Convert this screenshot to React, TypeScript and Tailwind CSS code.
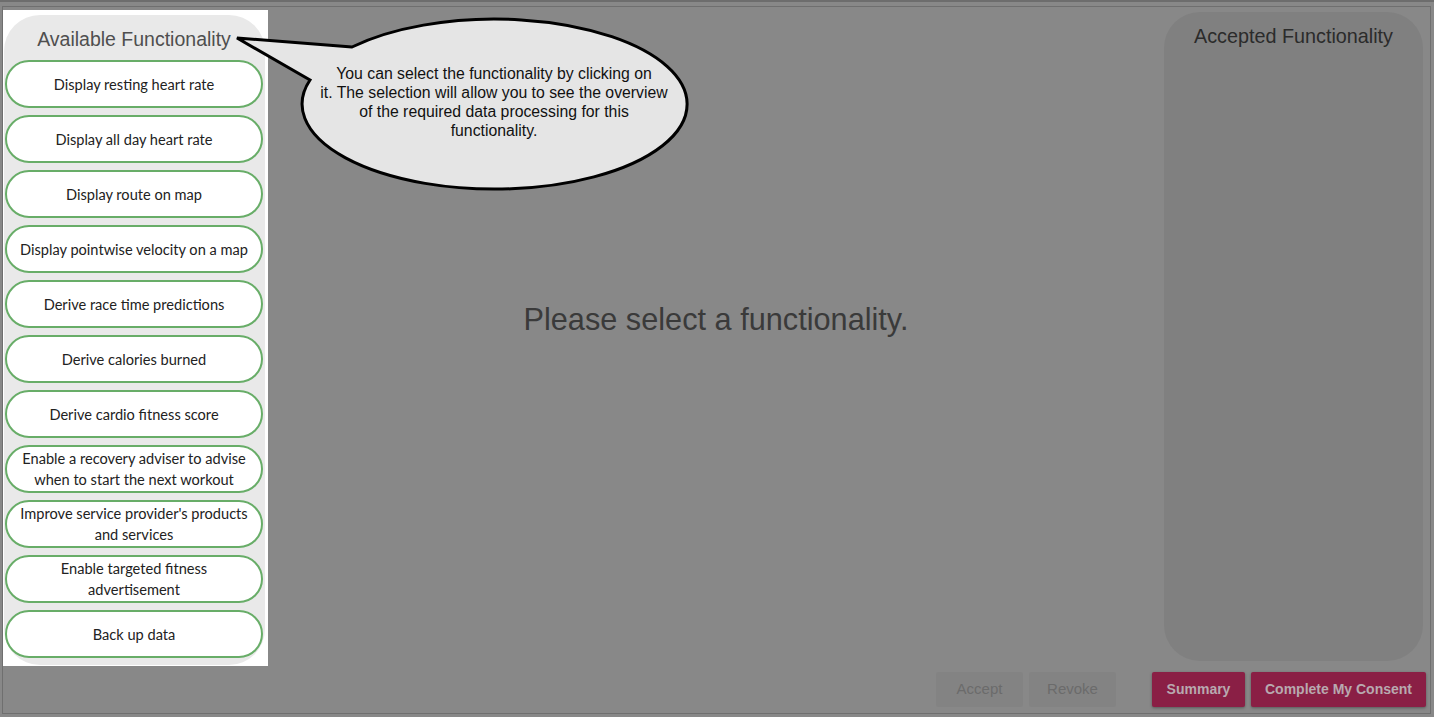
import React from "react"

const functionality = [
  ["Display resting heart rate"],
  ["Display all day heart rate"],
  ["Display route on map"],
  ["Display pointwise velocity on a map"],
  ["Derive race time predictions"],
  ["Derive calories burned"],
  ["Derive cardio fitness score"],
  ["Enable a recovery adviser to advise", "when to start the next workout"],
  ["Improve service provider's products", "and services"],
  ["Enable targeted fitness", "advertisement"],
  ["Back up data"],
]

function FunctionalityButton({ lines }: { lines: string[] }) {
  return (
    <button className="h-[48px] w-[258px] shrink-0 rounded-full border-2 border-[#68ad68] bg-white text-center font-['Lato',sans-serif] text-[14.6px] leading-[21px] text-[#222]">
      {lines.map((line) => (
        <div key={line}>{line}</div>
      ))}
    </button>
  )
}

function Callout() {
  return (
    <div className="absolute left-[230px] top-[10px] h-[185px] w-[470px]">
      <svg width="470" height="185" viewBox="230 10 470 185" className="absolute left-0 top-0">
        <path
          d="M352 45 L237 36 L310 78 A192.5 85 0 1 0 352 45 Z"
          fill="#e5e5e5"
          stroke="#000"
          strokeWidth="3"
          strokeLinejoin="miter"
        />
      </svg>
      <div className="absolute left-[58px] top-[52px] w-[412px] text-center font-['Liberation_Sans',Arial,sans-serif] text-[15.8px] leading-[19px] text-[#111]">
        You can select the functionality by clicking on
        <br />
        it. The selection will allow you to see the overview
        <br />
        of the required data processing for this
        <br />
        functionality.
      </div>
    </div>
  )
}

export default function App() {
  return (
    <div className="relative h-[717px] w-[1434px] overflow-hidden border-t-2 border-[#6d6d6d] bg-[#888888] font-['Liberation_Sans',Arial,sans-serif]">
      <div className="ml-[2px] mt-[4px] flex h-[708px] w-[1429px] border border-[#6f6f6f]">
        {/* highlighted list of functionality */}
        <div className="mt-[3px] h-[656px] w-[265px] shrink-0 bg-white pl-[1px] pt-[5px]">
          <div className="flex h-[650px] w-[261px] flex-col items-start rounded-[36px] bg-[#e9e9e9] pl-[1px]">
            <div className="w-[258px] pt-[13px] text-center text-[19.5px] leading-[22px] text-[#4f4f4f]">
              Available Functionality
            </div>
            <div className="mt-[10px] flex flex-col gap-[7px]">
              {functionality.map((lines) => (
                <FunctionalityButton key={lines[0]} lines={lines} />
              ))}
            </div>
          </div>
        </div>

        <div className="flex flex-1 flex-col">
          <div className="flex h-[654px]">
            <div className="flex flex-1 items-center justify-center pb-[28px] text-[30.7px] text-[#3a3a3a]">
              Please select a functionality.
            </div>
            <div className="mr-[7px] mt-[5px] h-[649px] w-[259px] rounded-[36px] bg-[#808080] pt-[13px] text-center text-[19.8px] leading-[22px] text-[#2b2b2b]">
              Accepted Functionality
            </div>
          </div>
          <div className="mt-[11px] flex h-[35px] items-stretch justify-end pr-[4px]">
            <button className="w-[87px] rounded-[2px] bg-[#838383] text-[15px] text-[#6b6b6b]">Accept</button>
            <button className="ml-[6px] w-[87px] rounded-[2px] bg-[#838383] text-[15px] text-[#6b6b6b]">Revoke</button>
            <button className="ml-[36px] w-[93px] rounded-[2px] bg-[#8a1f45] text-[14px] font-bold text-[#b8a9af] shadow-[0_1px_3px_rgba(0,0,0,0.35)]">
              Summary
            </button>
            <button className="ml-[6px] w-[175px] rounded-[2px] bg-[#8a1f45] text-[14px] font-bold text-[#b8a9af] shadow-[0_1px_3px_rgba(0,0,0,0.35)]">
              Complete My Consent
            </button>
          </div>
        </div>
      </div>
      <Callout />
    </div>
  )
}
